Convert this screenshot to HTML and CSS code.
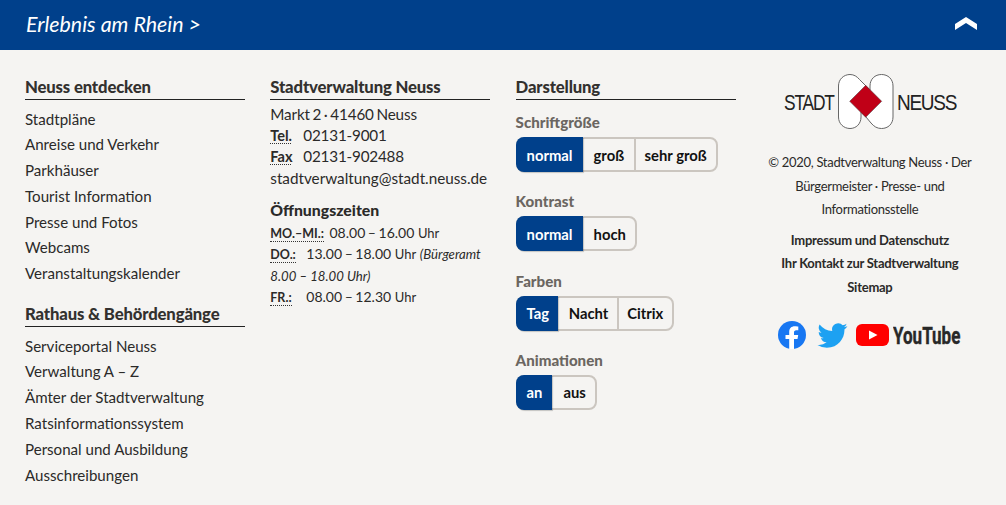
FILE: index.html
```html
<!DOCTYPE html>
<html lang="de">
<head>
<meta charset="utf-8">
<title>Stadt Neuss</title>
<link rel="stylesheet" href="styles.css">
</head>
<body>
<header class="bar">
  <a class="bar-title">Erlebnis am Rhein &gt;</a>
  <svg class="bar-up" width="22" height="13" viewBox="0 0 22 13"><path d="M0 7 L11 0 L22 7 V13 L11 6 L0 13Z" fill="#fff"/></svg>
</header>
<main class="footer">
  <section class="col">
    <h2 class="head">Neuss entdecken</h2>
    <ul class="links">
      <li>Stadtpläne</li><li>Anreise und Verkehr</li><li>Parkhäuser</li><li>Tourist Information</li><li>Presse und Fotos</li><li>Webcams</li><li>Veranstaltungskalender</li>
    </ul>
    <h2 class="head head-next">Rathaus &amp; Behördengänge</h2>
    <ul class="links links-next">
      <li>Serviceportal Neuss</li><li>Verwaltung A – Z</li><li>Ämter der Stadtverwaltung</li><li>Ratsinformationssystem</li><li>Personal und Ausbildung</li><li>Ausschreibungen</li>
    </ul>
  </section>
  <section class="col">
    <h2 class="head">Stadtverwaltung Neuss</h2>
    <div class="contact">
      <div class="addr">Markt 2 · 41460 Neuss</div>
      <div><abbr class="ab">Tel.</abbr><span class="num">02131-9001</span></div>
      <div><abbr class="ab">Fax</abbr><span class="num">02131-902488</span></div>
      <div>stadtverwaltung@stadt.neuss.de</div>
    </div>
    <h3 class="sub">Öffnungszeiten</h3>
    <div class="hours">
      <div><abbr class="day">Mo.–Mi.:</abbr> <span class="t">08.00 – 16.00</span> <small>Uhr</small></div>
      <div><span class="slot"><abbr class="day">Do.:</abbr></span><span class="t">13.00 – 18.00</span> <small>Uhr</small> <em>(Bürgeramt 8.00 – 18.00 Uhr)</em></div>
      <div><span class="slot"><abbr class="day">Fr.:</abbr></span><span class="t">08.00 – 12.30</span> <small>Uhr</small></div>
    </div>
  </section>
  <section class="col">
    <h2 class="head">Darstellung</h2>
    <h3 class="opt">Schriftgröße</h3>
    <div class="seg"><span class="on">normal</span><span>groß</span><span>sehr groß</span></div>
    <h3 class="opt">Kontrast</h3>
    <div class="seg"><span class="on">normal</span><span>hoch</span></div>
    <h3 class="opt">Farben</h3>
    <div class="seg seg-tight"><span class="on">Tag</span><span>Nacht</span><span>Citrix</span></div>
    <h3 class="opt">Animationen</h3>
    <div class="seg"><span class="on">an</span><span>aus</span></div>
  </section>
  <aside class="side">
    <svg class="logo" width="174" height="56" viewBox="0 0 174 56">
      <text transform="translate(1 36) scale(.79 1)" class="logo-t">STADT</text>
      <path d="M55.500 12 C55.500 5 61 .5 67 .5 C71 .5 74 2.500 76.500 5.500 L82 11 L87 16 V12 C87 5 92 .5 98.500 .5 C105 .5 110 5 110 12 V43 C110 50 105 54.500 98.500 54.500 C94 54.500 91 52.500 88 49 L83 43 L78 38 V43 C78 50 73 54.500 67 54.500 C61 54.500 55.500 50 55.500 43Z" fill="#fff" stroke="#666"/>
      <path d="M82.700 11.300 L98.700 27.300 L82.700 43.300 L66.700 27.300Z" fill="#c00017" stroke="#444" stroke-width=".5"/>
      <text transform="translate(114 36) scale(.865 1)" class="logo-t">NEUSS</text>
    </svg>
    <p class="copy">© 2020, Stadtverwaltung Neuss · Der Bürgermeister · Presse- und Informationsstelle</p>
    <ul class="side-links">
      <li>Impressum und Datenschutz</li><li>Ihr Kontakt zur Stadtverwaltung</li><li>Sitemap</li>
    </ul>
    <div class="social">
      <svg class="fb" width="28" height="28" viewBox="0 0 28 28"><circle cx="14" cy="14" r="14" fill="#1877f2"/><path d="M19.500 18 L20.200 14 H16 V11.500 C16 10.300 16.600 9.300 18.300 9.300 H20.300 V5.600 C20.300 5.600 18.500 5.300 16.800 5.300 C13.300 5.300 11.200 7.400 11.200 11 V14 H7.500 V18 H11.200 V28 H16 V18Z" fill="#fff"/></svg>
      <svg class="tw" width="31" height="25" viewBox="0 0 24 20"><path d="M23.950 2.570a9.830 9.830 0 0 1-2.820.770 4.930 4.930 0 0 0 2.160-2.720 9.860 9.860 0 0 1-3.120 1.190 4.920 4.920 0 0 0-8.380 4.490A13.960 13.960 0 0 1 1.670 1.150a4.920 4.920 0 0 0 1.520 6.570 4.900 4.900 0 0 1-2.230-.62v.06a4.920 4.920 0 0 0 3.950 4.820 4.990 4.990 0 0 1-2.210.08 4.940 4.940 0 0 0 4.600 3.420A9.870 9.870 0 0 1 0 17.520a13.940 13.940 0 0 0 7.550 2.210c9.060 0 14-7.500 14-13.980 0-.21 0-.42-.02-.63a9.940 9.940 0 0 0 2.420-2.550z" fill="#1da1f2"/></svg>
      <svg class="ytb" width="33" height="22" viewBox="0 0 33 22"><rect width="33" height="22" rx="6" fill="#f00"/><path d="M13 6.500 L21.500 11 L13 15.500Z" fill="#fff"/></svg>
      <svg class="yt" width="70" height="28" viewBox="0 0 70 28"><text transform="translate(0 23) scale(.71 1)" class="yt-t">YouTube</text></svg>
    </div>
  </aside>
</main>
</body>
</html>
```
FILE: styles.css
```css
* { box-sizing: border-box; }
html, body { margin: 0; padding: 0; }
body {
  width: 1006px;
  height: 505px;
  overflow: hidden;
  background: #f5f4f2;
  color: #2b2a29;
  font-family: "Lato", "Liberation Sans", sans-serif;
  font-size: 15.100px;
}
.bar {
  height: 50px;
  background: #00408b;
  color: #fff;
  display: flex;
  align-items: center;
  justify-content: space-between;
  padding: 0 29px 0 26px;
}
.bar-title { font-size: 21.400px; font-style: italic; padding-bottom: 3px; }
.bar-up { margin-bottom: 3px; }
.footer {
  display: flex;
  padding: 25px 0 0 25px;
}
.col { width: 220px; margin-right: 25.300px; flex: none; }
.head {
  margin: 0;
  font-size: 16.700px;
  line-height: 24px;
  height: 25px;
  font-weight: 900;
  border-bottom: 1px solid #222;
  color: #33312f;
  letter-spacing: -.15px;
}
.head-next { margin-top: 15px; }
.links { list-style: none; margin: 6.500px 0 0; padding: 0; }
.links-next { margin-top: 6.500px; }
.links li { line-height: 25.800px; }
.contact { margin-top: 4px; line-height: 21.200px; font-size: 15.250px; }
.addr { word-spacing: -1.100px; letter-spacing: -.15px; }
.ab {
  font-weight: 700;
  font-size: 14.500px;
  border-bottom: 1px dotted #333;
  display: inline-block;
  width: 21px;
  line-height: 15px;
  margin-right: 12px;
}
.num { letter-spacing: -.2px; }
.sub { margin: 10px 0 0; font-size: 15.800px; line-height: 22px; font-weight: 900; }
.hours { line-height: 21.500px; font-size: 14px; margin-top: 1px; }
.day {
  font-weight: 700;
  font-size: 12.500px;
  line-height: 1;
  text-transform: uppercase;
  border-bottom: 1px dotted #333;
  margin-right: 2px;
}
.slot { display: inline-block; width: 36px; line-height: 14px; }
.t { word-spacing: -1px; }
small { font-size: 13px; line-height: 1; }
em { font-size: 13.200px; line-height: 1; }
.opt { margin: 13px 0 5px; font-size: 15.100px; line-height: 20px; color: #6b6661; font-weight: 900; }
.opt:first-of-type { margin-top: 12px; }
.seg {
  display: inline-flex;
  height: 35px;
  border: 2px solid #cbc6c0;
  border-radius: 8px;
  margin-bottom: 6.300px;
  vertical-align: top;
}
.seg span {
  display: flex;
  align-items: center;
  padding: 0 9.500px 0 9px;
  font-size: 14.800px;
  font-weight: 700;
  color: #111;
  border-left: 2px solid #cbc6c0;
}
.seg .on {
  background: #00408b;
  color: #fff;
  border: 0;
  margin: -2px 0 -2px -2px;
  padding: 0 10px 0 11px;
  border-radius: 8px 0 0 8px;
  box-shadow: 1px 1px 1px rgba(0,0,0,.2);
}
.seg .on + span { border-left: 0; padding-left: 11px; }
.seg-tight span { padding: 0 8.500px 0 8.500px; }
.seg-tight .on { padding: 0 9px 0 11px; }
.seg-tight .on + span { padding-left: 10.500px; }
.side {
  width: 210px;
  margin-left: 4px;
  text-align: center;
  flex: none;
}
.logo { display: block; margin: -1px auto 0; }
.logo-t { font: 22px "Liberation Sans", sans-serif; letter-spacing: -1.500px; fill: #222; }
.copy { margin: 21px 0 0; font-size: 13px; letter-spacing: -.31px; line-height: 23.500px; }
.side-links { list-style: none; margin: 7px 0 0; padding: 0; font-size: 13px; letter-spacing: -.25px; line-height: 23.500px; font-weight: 700; }
.social { display: flex; align-items: center; margin-top: 22px; padding-left: 13px; }
.tw { margin-left: 11px; }
.ytb { margin-left: 8px; }
.yt { margin-left: 4px; }
.yt-t { font: 700 24px "Roboto", sans-serif; fill: #282828; stroke: #282828; stroke-width: .4px; }
```
